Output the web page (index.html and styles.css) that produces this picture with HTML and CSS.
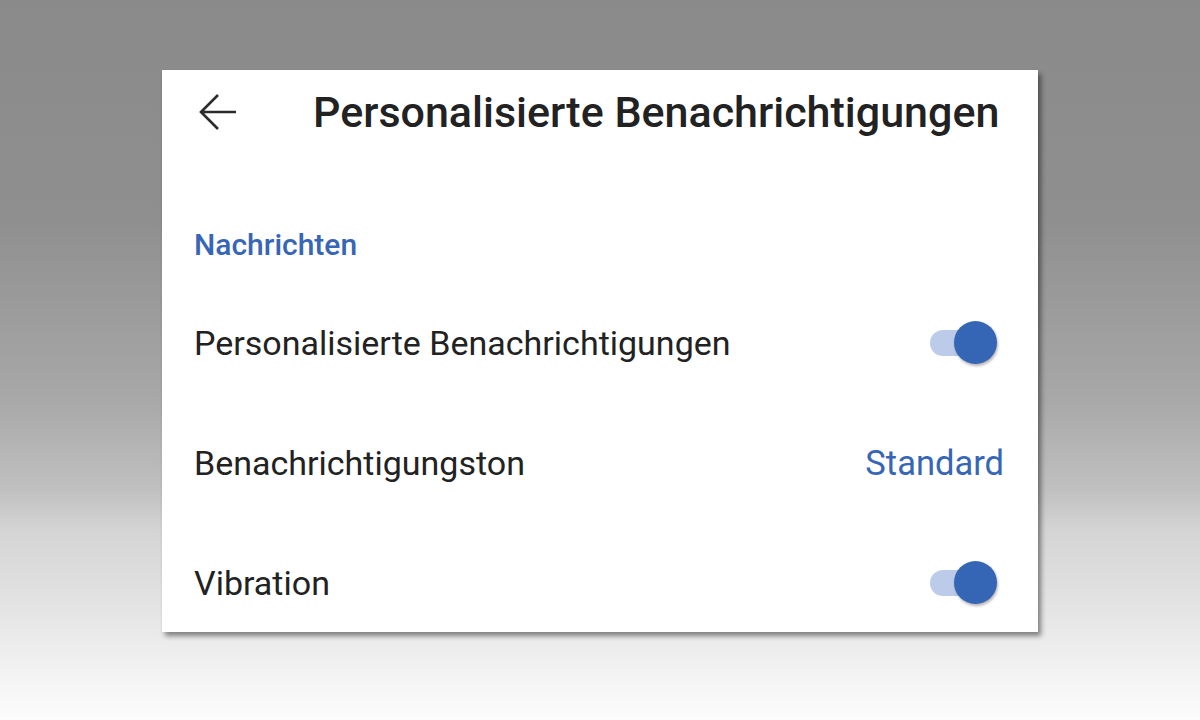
FILE: index.html
```html
<!DOCTYPE html>
<html lang="de">
<head>
<meta charset="utf-8">
<link rel="stylesheet" href="styles.css">
</head>
<body>
<div class="stage">
  <div class="card">
    <div class="appbar">
      <svg class="back" width="40" height="40" viewBox="0 0 40 40"><path d="M38 18H4M20 1L3 18l17 17" fill="none" stroke="#2b2b2b" stroke-width="2.6"/></svg>
      <h1 class="title">Personalisierte Benachrichtigungen</h1>
    </div>
    <div class="section">Nachrichten</div>
    <div class="rows">
      <div class="row">
        <span class="label">Personalisierte Benachrichtigungen</span>
        <span class="switch"><span class="track"></span><span class="thumb"></span></span>
      </div>
      <div class="row">
        <span class="label">Benachrichtigungston</span>
        <span class="value">Standard</span>
      </div>
      <div class="row">
        <span class="label">Vibration</span>
        <span class="switch"><span class="track"></span><span class="thumb"></span></span>
      </div>
    </div>
  </div>
</div>
</body>
</html>
```
FILE: styles.css
```css
html, body { margin: 0; padding: 0; }
body {
  width: 1200px; height: 720px; overflow: hidden;
  font-family: Roboto, "Liberation Sans", sans-serif;
  background: linear-gradient(180deg, #8a8a8a 0px, #8f8f8f 220px, #a8a8a8 400px, #c0c0c0 490px, #d4d4d4 530px, #e2e2e2 600px, #f4f4f4 680px, #fcfcfc 720px);
}
.stage { padding-top: 70px; padding-left: 162px; }
.card {
  width: 876px; height: 562px; background: #fff;
  box-shadow: 3px 4px 5px rgba(0,0,0,0.45);
  box-sizing: border-box;
  padding: 0 35px 0 32px;
}
.appbar { display: flex; align-items: center; height: 84px; }
.back { margin-left: 4px; margin-top: 4px; flex: none; }
.title {
  margin: 0 0 0 75px; font-size: 43px; font-weight: 500; color: #222;
  white-space: nowrap;
}
.section {
  margin-top: 71px; font-size: 30px; font-weight: 500; color: #3766b6; height: 40px; line-height: 40px;
}
.rows { margin-top: 18px; }
.row { display: flex; align-items: center; justify-content: space-between; height: 120px; }
.label { font-size: 34px; color: #222; }
.value { font-size: 34.5px; color: #3766b6; margin-right: -1px; }
.switch { position: relative; width: 67px; height: 44px; margin-right: 6px; }
.track { position: absolute; left: 0; top: 9px; width: 60px; height: 26px; border-radius: 13px; background: #bccbea; }
.thumb { position: absolute; right: 0; top: 0; width: 43px; height: 43px; border-radius: 50%; background: #3565b5; box-shadow: 1px 2px 3px rgba(0,0,0,0.3); }
```
